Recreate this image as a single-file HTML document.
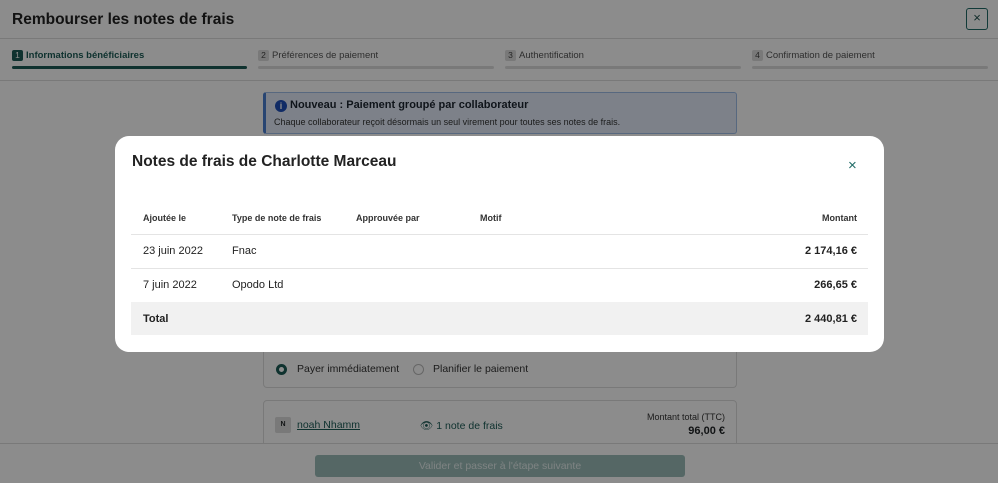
<!DOCTYPE html>
<html><head><meta charset="utf-8"><style>
*{box-sizing:border-box;margin:0;padding:0}
body{width:998px;height:483px;overflow:hidden;position:relative;background:#fff;font-family:"Liberation Sans",sans-serif;color:#1f2326}
.abs{position:absolute}
.ov{position:absolute;left:0;top:0;width:998px;height:483px;background:rgba(0,0,0,0.45)}
.step{position:absolute;top:50px;font-size:9.5px;color:#555}
.step b{display:inline-block;width:11px;height:11px;background:#ddd;border-radius:2px;text-align:center;font-size:8.5px;line-height:11px;margin-right:3px;color:#444;font-weight:normal}
.bar{position:absolute;top:66px;height:3px;background:#ddd;border-radius:2px}
.modal{position:absolute;left:115px;top:136px;width:769px;height:216px;background:#fff;border-radius:14px}
.th{position:absolute;top:77px;font-size:9px;color:#333;font-weight:bold}
.td{position:absolute;font-size:11px;color:#222}
.hr{position:absolute;left:16px;width:737px;height:1px;background:#e4e4e4}
</style></head><body>
<div class="abs" style="left:12px;top:11px;font-size:15.5px;font-weight:bold;color:#222">Rembourser les notes de frais</div>
<div class="abs" style="left:966px;top:8px;width:22px;height:22px;border:1.5px solid #1f6b66;border-radius:3px;color:#1f4f4c;font-size:13px;text-align:center;line-height:18px">×</div>
<div class="abs" style="left:0;top:38px;width:998px;height:1px;background:#ddd"></div>
<div class="step" style="left:12px;color:#1c5c57;font-weight:bold"><b style="background:#1c5c57;color:#fff">1</b>Informations bénéficiaires</div>
<div class="step" style="left:258px"><b>2</b>Préférences de paiement</div>
<div class="step" style="left:505px"><b>3</b>Authentification</div>
<div class="step" style="left:752px"><b>4</b>Confirmation de paiement</div>
<div class="bar" style="left:12px;width:235px;background:#1c5c57"></div>
<div class="bar" style="left:258px;width:236px"></div>
<div class="bar" style="left:505px;width:236px"></div>
<div class="bar" style="left:752px;width:236px"></div>
<div class="abs" style="left:0;top:80px;width:998px;height:1px;background:#ddd"></div>
<div class="abs" style="left:263px;top:92px;width:474px;height:42px;background:#e3ecfa;border:1px solid #9fbde8;border-left:3px solid #4a7fd0;border-radius:3px"></div>
<div class="abs" style="left:275px;top:100px;width:12px;height:12px;border-radius:50%;background:#1e4fb8;color:#fff;font-size:9px;font-weight:bold;text-align:center;line-height:12px">i</div>
<div class="abs" style="left:290px;top:99px;font-size:11px;font-weight:bold;color:#1d2530">Nouveau : Paiement groupé par collaborateur</div>
<div class="abs" style="left:274px;top:117px;font-size:9px;color:#333">Chaque collaborateur reçoit désormais un seul virement pour toutes ses notes de frais.</div>
<div class="abs" style="left:263px;top:340px;width:474px;height:48px;border:1px solid #ddd;border-top:none;border-radius:0 0 4px 4px"></div>
<div class="abs" style="left:276px;top:364px;width:11px;height:11px;border-radius:50%;border:3px solid #1c5c57"></div>
<div class="abs" style="left:297px;top:363px;font-size:10.5px;color:#333">Payer immédiatement</div>
<div class="abs" style="left:413px;top:364px;width:11px;height:11px;border-radius:50%;border:1px solid #bbb"></div>
<div class="abs" style="left:433px;top:363px;font-size:10.5px;color:#333">Planifier le paiement</div>
<div class="abs" style="left:263px;top:400px;width:474px;height:60px;border:1px solid #ddd;border-radius:4px"></div>
<div class="abs" style="left:275px;top:417px;width:16px;height:16px;background:#ddd;border-radius:2px;font-size:7px;font-weight:bold;text-align:center;line-height:16px">N</div>
<div class="abs" style="left:297px;top:419px;font-size:10.5px;color:#1c5c57;text-decoration:underline">noah Nhamm</div>
<div class="abs" style="left:420px;top:419px;font-size:10.5px;color:#1c5c57">👁 1 note de frais</div>
<div class="abs" style="left:600px;top:412px;width:125px;text-align:right;font-size:9px;color:#333">Montant total (TTC)</div>
<div class="abs" style="left:600px;top:425px;width:125px;text-align:right;font-size:11px;font-weight:bold">96,00 €</div>
<div class="abs" style="left:0;top:443px;width:998px;height:40px;background:#fff;border-top:1px solid #ddd"></div>
<div class="abs" style="left:315px;top:455px;width:370px;height:22px;background:#9bbcb9;border-radius:3px;color:#e6efee;font-size:10.5px;text-align:center;line-height:22px">Valider et passer à l'étape suivante</div>
<div class="ov"></div>
<div class="modal">
<div class="abs" style="left:17px;top:17px;font-size:15.5px;font-weight:bold;color:#222">Notes de frais de Charlotte Marceau</div>
<div class="abs" style="left:733px;top:21px;font-size:15px;color:#1f6b66">×</div>
<div class="th" style="left:28px">Ajoutée le</div>
<div class="th" style="left:117px">Type de note de frais</div>
<div class="th" style="left:241px">Approuvée par</div>
<div class="th" style="left:365px">Motif</div>
<div class="th" style="right:27px">Montant</div>
<div class="hr" style="top:98px"></div>
<div class="td" style="left:28px;top:109px">23 juin 2022</div>
<div class="td" style="left:117px;top:109px">Fnac</div>
<div class="td" style="right:27px;top:109px;font-weight:bold">2 174,16 €</div>
<div class="hr" style="top:132px"></div>
<div class="td" style="left:28px;top:143px">7 juin 2022</div>
<div class="td" style="left:117px;top:143px">Opodo Ltd</div>
<div class="td" style="right:27px;top:143px;font-weight:bold">266,65 €</div>
<div class="abs" style="left:16px;top:166px;width:737px;height:33px;background:#f1f1f1"></div>
<div class="td" style="left:28px;top:177px;font-weight:bold">Total</div>
<div class="td" style="right:27px;top:177px;font-weight:bold">2 440,81 €</div>
</div>
</body></html>
